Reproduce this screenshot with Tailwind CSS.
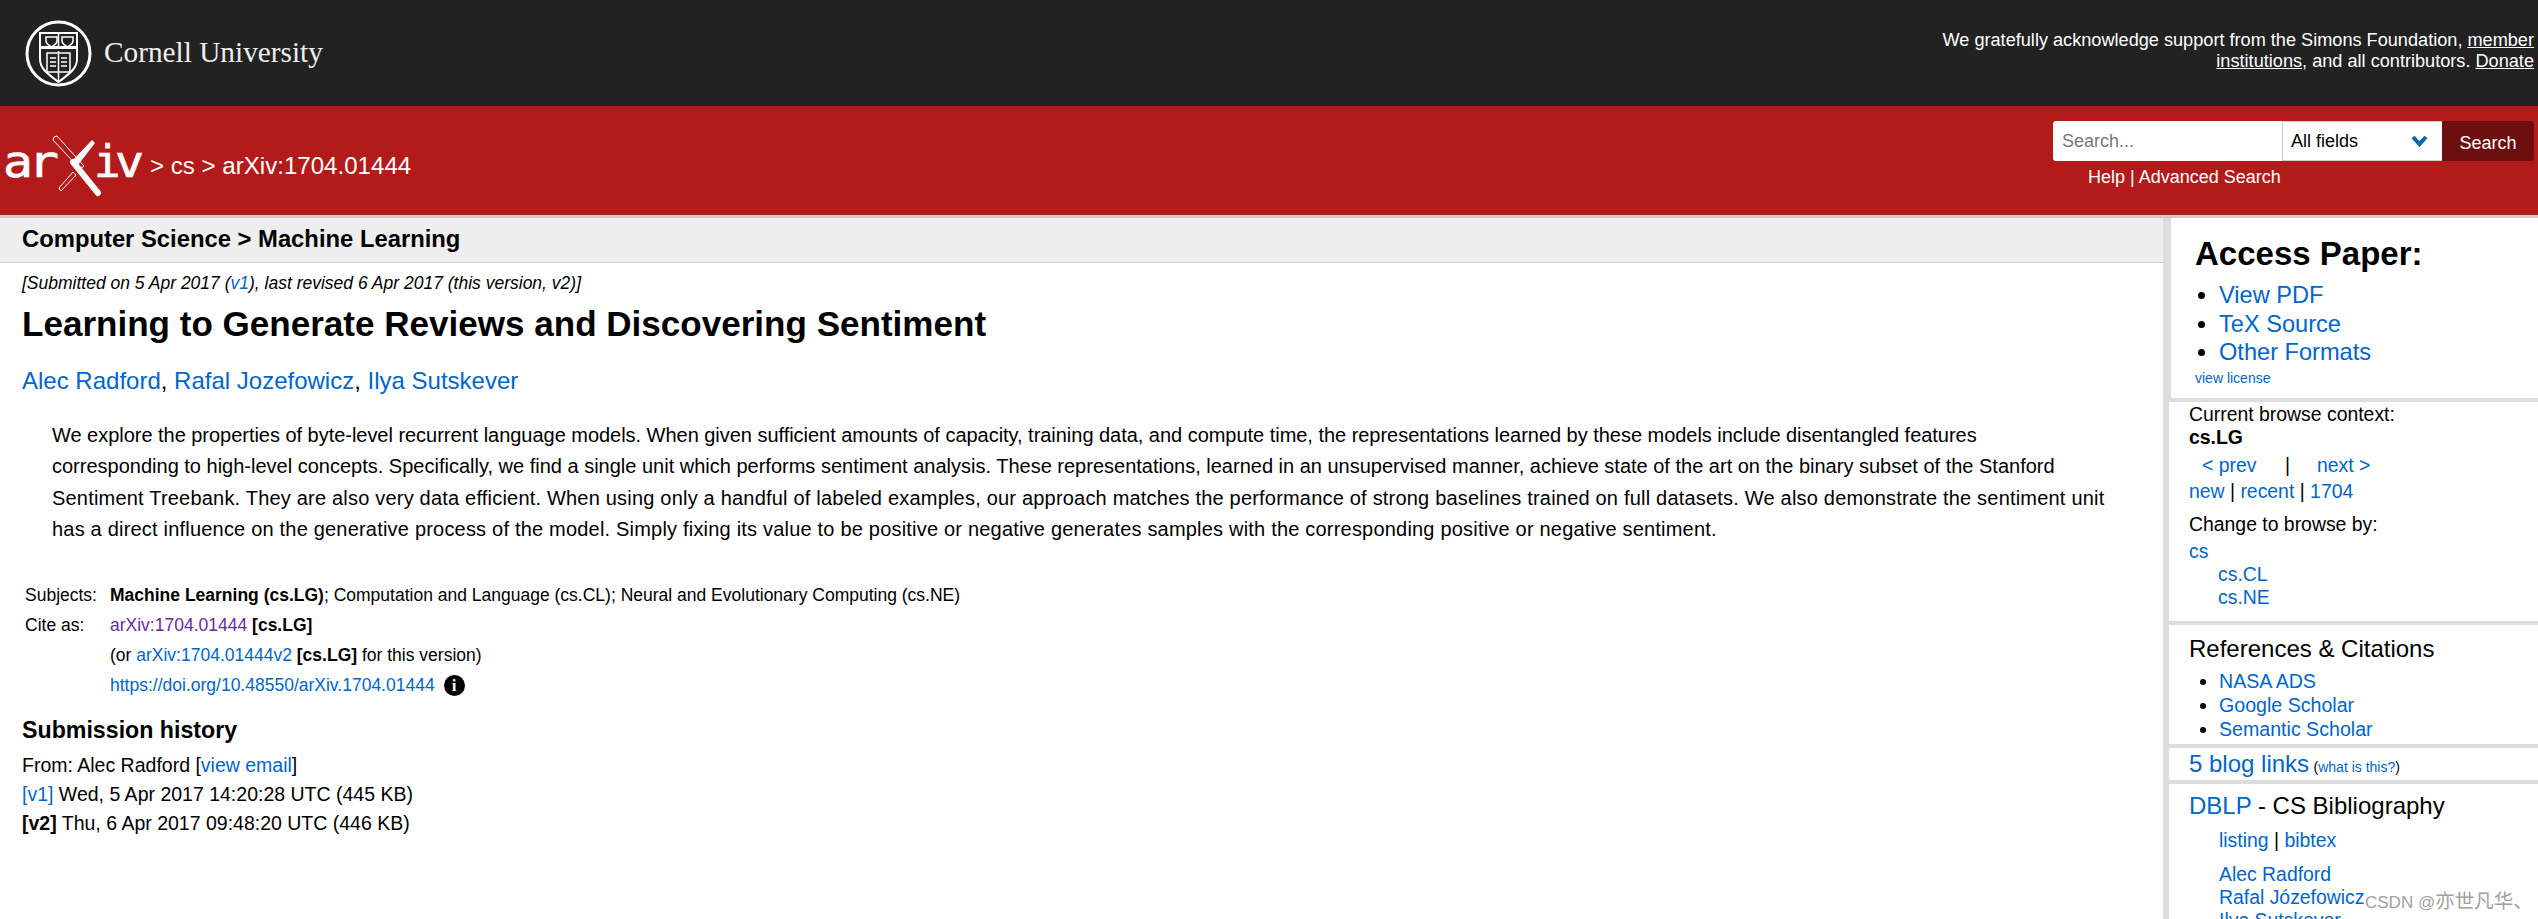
<!DOCTYPE html>
<html lang="en">
<head>
  <meta charset="UTF-8">
  <title>Learning to Generate Reviews and Discovering Sentiment - arXiv</title>
  <script src="https://cdn.jsdelivr.net/npm/@tailwindcss/browser@4"></script>
</head>
<body class="h-[919px] overflow-hidden bg-white font-['Liberation_Sans',Arial,sans-serif] text-black relative">

  <!-- Cornell bar -->
  <header class="h-[106px] bg-[#222] flex items-center justify-between pl-[25px] pr-[4px] text-white">
    <div class="flex items-center gap-[12px]">
      <svg width="67" height="67" viewBox="0 0 67 67" fill="none" stroke="#fff">
        <circle cx="33.5" cy="33.5" r="31.5" stroke-width="3"/>
        <path d="M15 13h37v26c0 10-8 15-18.500 23C23 54 15 49 15 39z" stroke-width="2"/>
        <path d="M15 27.500h37" stroke-width="3"/>
        <path d="M33.500 13v14M33.500 31v31" stroke-width="1.500"/>
        <path d="M21 17h11v4c0 3-3 4-5.500 6-2.500-2-5.500-3-5.500-6zM37 17h11v4c0 3-3 4-5.500 6-2.500-2-5.500-3-5.500-6z" stroke-width="1.500"/>
        <path d="M22 33h23v19H22z" stroke-width="1.500"/>
        <path d="M25 38h6M25 42h6M25 46h6M36 38h6M36 42h6M36 46h6" stroke-width="1.500"/>
      </svg>
      <span class="font-['Liberation_Serif',serif] text-[29.300px] leading-none text-[#eee]">Cornell University</span>
    </div>
    <p class="w-[610px] text-right text-[18.150px] leading-[21px] -mt-[5px]">We gratefully acknowledge support from the Simons Foundation, <a href="#" class="underline">member institutions</a>, and all contributors. <a href="#" class="underline">Donate</a></p>
  </header>

  <!-- arXiv bar -->
  <div class="h-[112px] bg-[#b31b1b] border-b-[3px] border-[#ccc] flex justify-between text-white pr-[4px]">
    <div class="flex items-start gap-[4px]">
      <svg class="mt-[19px]" width="146" height="80" viewBox="0 0 146 80" fill="none" stroke="#fff">
        <g font-family="DejaVu Sans Mono" font-size="44" fill="#fff" stroke="#fff" stroke-width="0.7">
          <text x="3" y="52" textLength="30" lengthAdjust="spacingAndGlyphs">a</text>
          <text x="28" y="52" textLength="31" lengthAdjust="spacingAndGlyphs">r</text>
          <text x="94" y="52">i</text>
          <text x="115" y="52" textLength="29" lengthAdjust="spacingAndGlyphs">v</text>
        </g>
        <path d="M54 12l3-1 27 30-4 3-27-29z" stroke-width="1"/>
        <path d="M73 37l25 31" stroke-width="6" stroke-linecap="round"/>
        <path d="M92 15l3 3-17 22-5-5z" fill="#fff" stroke="none"/>
        <path d="M73 47 59 63l2 3 15-16z" stroke-width="1"/>
      </svg>
      <span class="text-[24.100px] leading-[28px] mt-[46px]">&gt; cs &gt; arXiv:1704.01444</span>
    </div>
    <div class="pt-[15px] w-[481px]">
      <form class="flex h-[40px]">
        <div class="w-[229px] bg-white rounded-l-[3px] pl-[9px] text-[18px] leading-[40px] text-[#777]">Search...</div>
        <div class="w-[160px] bg-white border border-[#ccc] border-r-0 flex items-center justify-between pl-[8px] pr-[14px] text-[18px] text-black">
          All fields
          <svg width="17" height="12" viewBox="0 0 17 12" fill="none" stroke="#0068ac" stroke-width="4"><path d="M2 2l6.500 7L15 2"/></svg>
        </div>
        <button class="w-[92px] bg-[#6e0f0f] rounded-r-[3px] text-[18px] text-white pt-[5px]">Search</button>
      </form>
      <p class="text-[18px] leading-[21px] mt-[6px] pl-[35px]"><a href="#">Help</a> | <a href="#">Advanced Search</a></p>
    </div>
  </div>

  <div class="flex h-[701px]">
    <!-- Main column -->
    <main class="w-[2163px]">
      <div class="h-[45px] bg-[#eee] border-b border-[#ccc] pl-[22px] text-[23.800px] leading-[42px] font-bold">Computer Science &gt; Machine Learning</div>
      <div class="pl-[22px]">
        <p class="text-[17.500px] leading-[20px] italic mt-[10px]">[Submitted on 5 Apr 2017 (<a href="#" class="text-[#0066cc]">v1</a>), last revised 6 Apr 2017 (this version, v2)]</p>
        <h1 class="text-[35.050px] leading-[42px] font-bold mt-[10px]">Learning to Generate Reviews and Discovering Sentiment</h1>
        <div class="text-[24px] leading-[30px] mt-[21px]"><a href="#" class="text-[#0066cc]">Alec Radford</a>, <a href="#" class="text-[#0066cc]">Rafal Jozefowicz</a>, <a href="#" class="text-[#0066cc]">Ilya Sutskever</a></div>
        <p class="text-[20px] leading-[31.300px] mt-[24px] ml-[30px] w-[2090px]"><span class="tracking-[-0.03px]">We explore the properties of byte-level recurrent language models. When given sufficient amounts of capacity, training data, and compute time, the representations learned by these models include disentangled features</span><br>corresponding to high-level concepts. Specifically, we find a single unit which performs sentiment analysis. These representations, learned in an unsupervised manner, achieve state of the art on the binary subset of the Stanford<br><span class="tracking-[0.2px]">Sentiment Treebank. They are also very data efficient. When using only a handful of labeled examples, our approach matches the performance of strong baselines trained on full datasets. We also demonstrate the sentiment unit</span><br><span class="tracking-[0.2px]">has a direct influence on the generative process of the model. Simply fixing its value to be positive or negative generates samples with the corresponding positive or negative sentiment.</span></p>

        <table class="mt-[35px] ml-[3px] text-[17.500px] leading-[30px]">
          <tbody>
            <tr>
              <td class="w-[85px] align-top">Subjects:</td>
              <td><b>Machine Learning (cs.LG)</b>; Computation and Language (cs.CL); Neural and Evolutionary Computing (cs.NE)</td>
            </tr>
            <tr>
              <td class="align-top">Cite as:</td>
              <td><a href="#" class="text-[#6a2a9c]">arXiv:1704.01444</a> <b>[cs.LG]</b></td>
            </tr>
            <tr>
              <td></td>
              <td>(or <a href="#" class="text-[#0066cc]">arXiv:1704.01444v2</a> <b>[cs.LG]</b> for this version)</td>
            </tr>
            <tr>
              <td></td>
              <td class="flex items-center gap-[9px]">
                <a href="#" class="text-[#0066cc]">https://doi.org/10.48550/arXiv.1704.01444</a>
                <span class="w-[21px] h-[21px] rounded-full bg-black text-white flex items-center justify-center font-['Liberation_Serif',serif] font-bold text-[17px] leading-none">i</span>
              </td>
            </tr>
          </tbody>
        </table>

        <h2 class="text-[23.200px] leading-[28px] font-bold mt-[16px]">Submission history</h2>
        <div class="text-[19.500px] leading-[29px] mt-[7px]">
          <p>From: Alec Radford [<a href="#" class="text-[#0066cc]">view email</a>]</p>
          <p><a href="#" class="text-[#0066cc]">[v1]</a> Wed, 5 Apr 2017 14:20:28 UTC (445 KB)</p>
          <p><b>[v2]</b> Thu, 6 Apr 2017 09:48:20 UTC (446 KB)</p>
        </div>
      </div>
    </main>

    <!-- Sidebar -->
    <aside class="flex-1 border-l-[6px] border-[#ddd] bg-white">
      <section class="h-[184px] border-b-[4px] border-l-2 border-[#ddd] pl-[24px] pt-[16px]">
        <h2 class="text-[33px] leading-[40px] font-bold">Access Paper:</h2>
        <ul class="list-disc pl-[24px] text-[23.600px] leading-[28.600px] mt-[7px]">
          <li class="marker:text-black"><a href="#" class="text-[#0066cc]">View PDF</a></li>
          <li class="marker:text-black"><a href="#" class="text-[#0066cc]">TeX Source</a></li>
          <li class="marker:text-black"><a href="#" class="text-[#0066cc]">Other Formats</a></li>
        </ul>
        <a href="#" class="block text-[14px] leading-[18px] text-[#0066cc] mt-[2px]">view license</a>
      </section>

      <section class="h-[223px] border-b-[4px] border-[#ddd] pl-[20px] text-[19.400px] leading-[23px] pt-[1px]">
        <p>Current browse context:</p>
        <p class="font-bold">cs.LG</p>
        <p class="flex mt-[5px] ml-[13px]"><a href="#" class="text-[#0066cc] w-[83px]">&lt; prev</a><span class="w-[32px]">|</span><a href="#" class="text-[#0066cc]">next &gt;</a></p>
        <p class="mt-[3px]"><a href="#" class="text-[#0066cc]">new</a> | <a href="#" class="text-[#0066cc]">recent</a> | <a href="#" class="text-[#0066cc]">1704</a></p>
        <p class="mt-[10px]">Change to browse by:</p>
        <a href="#" class="block text-[#0066cc] mt-[4px]">cs</a>
        <a href="#" class="block text-[#0066cc] ml-[29px]">cs.CL</a>
        <a href="#" class="block text-[#0066cc] ml-[29px]">cs.NE</a>
      </section>

      <section class="h-[123px] border-b-[4px] border-[#ddd] pl-[20px] pt-[10px]">
        <h3 class="text-[24px] leading-[28px]">References &amp; Citations</h3>
        <ul class="list-disc pl-[30px] text-[19.600px] leading-[24px] mt-[6px]">
          <li class="marker:text-black"><a href="#" class="text-[#0066cc]">NASA ADS</a></li>
          <li class="marker:text-black"><a href="#" class="text-[#0066cc]">Google Scholar</a></li>
          <li class="marker:text-black"><a href="#" class="text-[#0066cc]">Semantic Scholar</a></li>
        </ul>
      </section>

      <section class="h-[36px] border-b-[4px] border-[#ddd] pl-[20px] leading-[32px]">
        <a href="#" class="text-[24px] text-[#0066cc]">5 blog links</a>
        <span class="text-[14px]">(<a href="#" class="text-[#0066cc]">what is this?</a>)</span>
      </section>

      <section class="pl-[20px] pt-[8px]">
        <h3 class="text-[24px] leading-[28px]"><a href="#" class="text-[#0066cc]">DBLP</a> - CS Bibliography</h3>
        <div class="ml-[30px] text-[19.400px] leading-[23px] mt-[9px]">
          <p><a href="#" class="text-[#0066cc]">listing</a> | <a href="#" class="text-[#0066cc]">bibtex</a></p>
          <a href="#" class="block text-[#0066cc] mt-[11px]">Alec Radford</a>
          <a href="#" class="block text-[#0066cc]">Rafal Józefowicz</a>
          <a href="#" class="block text-[#0066cc]">Ilya Sutskever</a>
        </div>
      </section>
    </aside>
  </div>

  <!-- CSDN watermark -->
  <div class="absolute left-[2365px] top-[888px] leading-[26px] text-[#a0a0a0] font-['Liberation_Sans','Noto_Sans_CJK_SC',sans-serif] whitespace-nowrap"><span class="text-[17px]">CSDN @</span><span class="text-[19.500px]">亦世凡华、</span></div>
</body>
</html>
